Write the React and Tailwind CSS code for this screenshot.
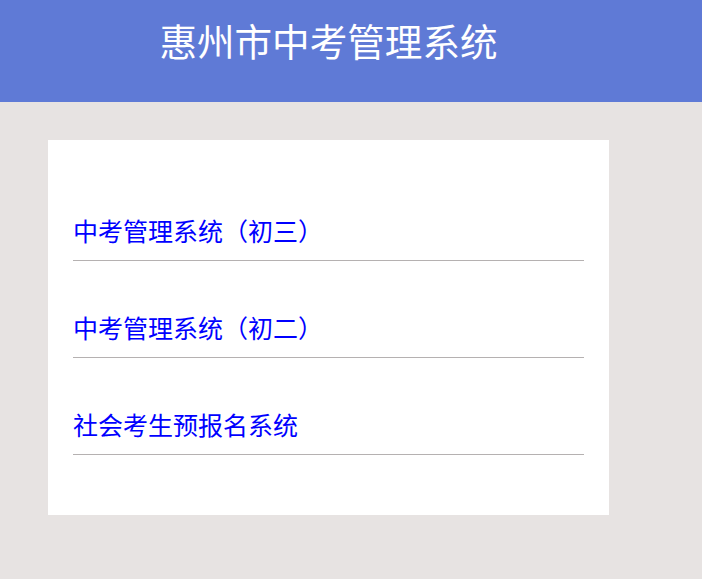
import React from "react";

const links = ["中考管理系统（初三）", "中考管理系统（初二）", "社会考生预报名系统"];

export default function App() {
  return (
    <div
      className="min-h-[579px] w-full bg-[#e7e3e2]"
      style={{ fontFamily: '"Noto Sans CJK SC", "Noto Sans", sans-serif' }}
    >
      <header className="h-[102px] w-full bg-[#5f7ad6]">
        <div className="ml-[48px] w-[561px] pt-[21px] text-center text-[37.6px] leading-[38px] text-white">
          惠州市中考管理系统
        </div>
      </header>
      <div className="ml-[48px] mt-[38px] w-[561px] bg-white px-[25px] pt-[24px] pb-[60px]">
        {links.map((t) => (
          <a
            key={t}
            href="#"
            className="block border-b border-[#b5b1b1] pt-[48px] pb-[12px] text-[25px] leading-[36px] text-[#0000ff]"
          >
            {t}
          </a>
        ))}
      </div>
    </div>
  );
}
